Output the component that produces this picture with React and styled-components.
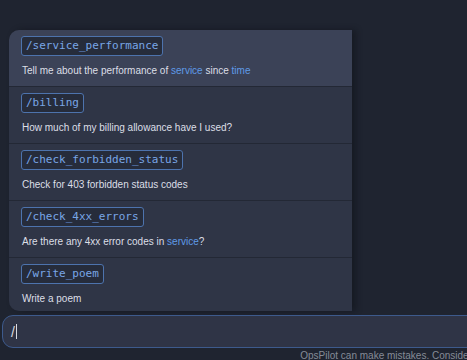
import React from 'react';
import styled, { createGlobalStyle } from 'styled-components';

const GlobalStyle = createGlobalStyle`
  html, body {
    margin: 0;
    padding: 0;
    background: #1f2430;
    overflow: hidden;
  }
  body {
    font-family: "Liberation Sans", Arial, sans-serif;
  }
`;

const Page = styled.div`
  width: 912px;
  height: 360px;
  padding: 30px 0 0 2px;
  box-sizing: border-box;
  display: flex;
  flex-direction: column;
`;

const Menu = styled.div`
  flex-shrink: 0;
  width: 343px;
  margin-left: 7px;
  display: flex;
  flex-direction: column;
  gap: 1px;
  background: #232835;
  border-radius: 10px 0 0 10px;
  overflow: hidden;
  box-shadow: 4px 0 6px rgba(10, 13, 20, 0.45);
`;

const Item = styled.div`
  flex-shrink: 0;
  box-sizing: border-box;
  padding: 6px 12px ${(p) => (p.$last ? '6px' : '9px')} 12px;
  display: flex;
  flex-direction: column;
  align-items: flex-start;
  gap: 8px;
  background: ${(p) => (p.$active ? '#3b4257' : '#2f3546')};
`;

const Command = styled.span`
  font-family: "DejaVu Sans Mono", monospace;
  font-size: 11px;
  line-height: 18px;
  padding: 0 4px;
  color: #79a6e6;
  background: #262c3b;
  border: 1px solid #4d73ad;
  border-radius: 3px;
`;

const Desc = styled.div`
  font-size: 10px;
  line-height: 13px;
  color: #dcdfe6;
  padding-left: 1px;
`;

const Var = styled.span`
  color: #5f9be8;
`;

const InputBox = styled.div`
  flex-shrink: 0;
  margin-top: 4px;
  height: 33px;
  box-sizing: border-box;
  border: 1px solid #3d5a8c;
  border-radius: 11px;
  background: #2f3446;
  display: flex;
  align-items: center;
  padding-left: 8px;
  font-size: 14px;
  color: #d8dbe2;
`;

const Caret = styled.span`
  display: inline-block;
  width: 1px;
  height: 15px;
  background: #d8dbe2;
  margin-left: 1px;
`;

const Footer = styled.div`
  flex-shrink: 0;
  text-align: center;
  font-size: 10px;
  line-height: 14px;
  margin-top: 1px;
  color: #858b97;
`;

const items = [
  { cmd: '/service_performance', desc: ['Tell me about the performance of ', { v: 'service' }, ' since ', { v: 'time' }], active: true },
  { cmd: '/billing', desc: ['How much of my billing allowance have I used?'] },
  { cmd: '/check_forbidden_status', desc: ['Check for 403 forbidden status codes'] },
  { cmd: '/check_4xx_errors', desc: ['Are there any 4xx error codes in ', { v: 'service' }, '?'] },
  { cmd: '/write_poem', desc: ['Write a poem'] },
];

export default function App() {
  return (
    <>
      <GlobalStyle />
      <Page>
        <Menu>
          {items.map((it, idx) => (
            <Item key={it.cmd} $active={it.active} $last={idx === items.length - 1}>
              <Command>{it.cmd}</Command>
              <Desc>
                {it.desc.map((part, i) =>
                  typeof part === 'string' ? part : <Var key={i}>{part.v}</Var>
                )}
              </Desc>
            </Item>
          ))}
        </Menu>
        <InputBox>
          /<Caret />
        </InputBox>
        <Footer>OpsPilot can make mistakes. Consider checking important information.</Footer>
      </Page>
    </>
  );
}
